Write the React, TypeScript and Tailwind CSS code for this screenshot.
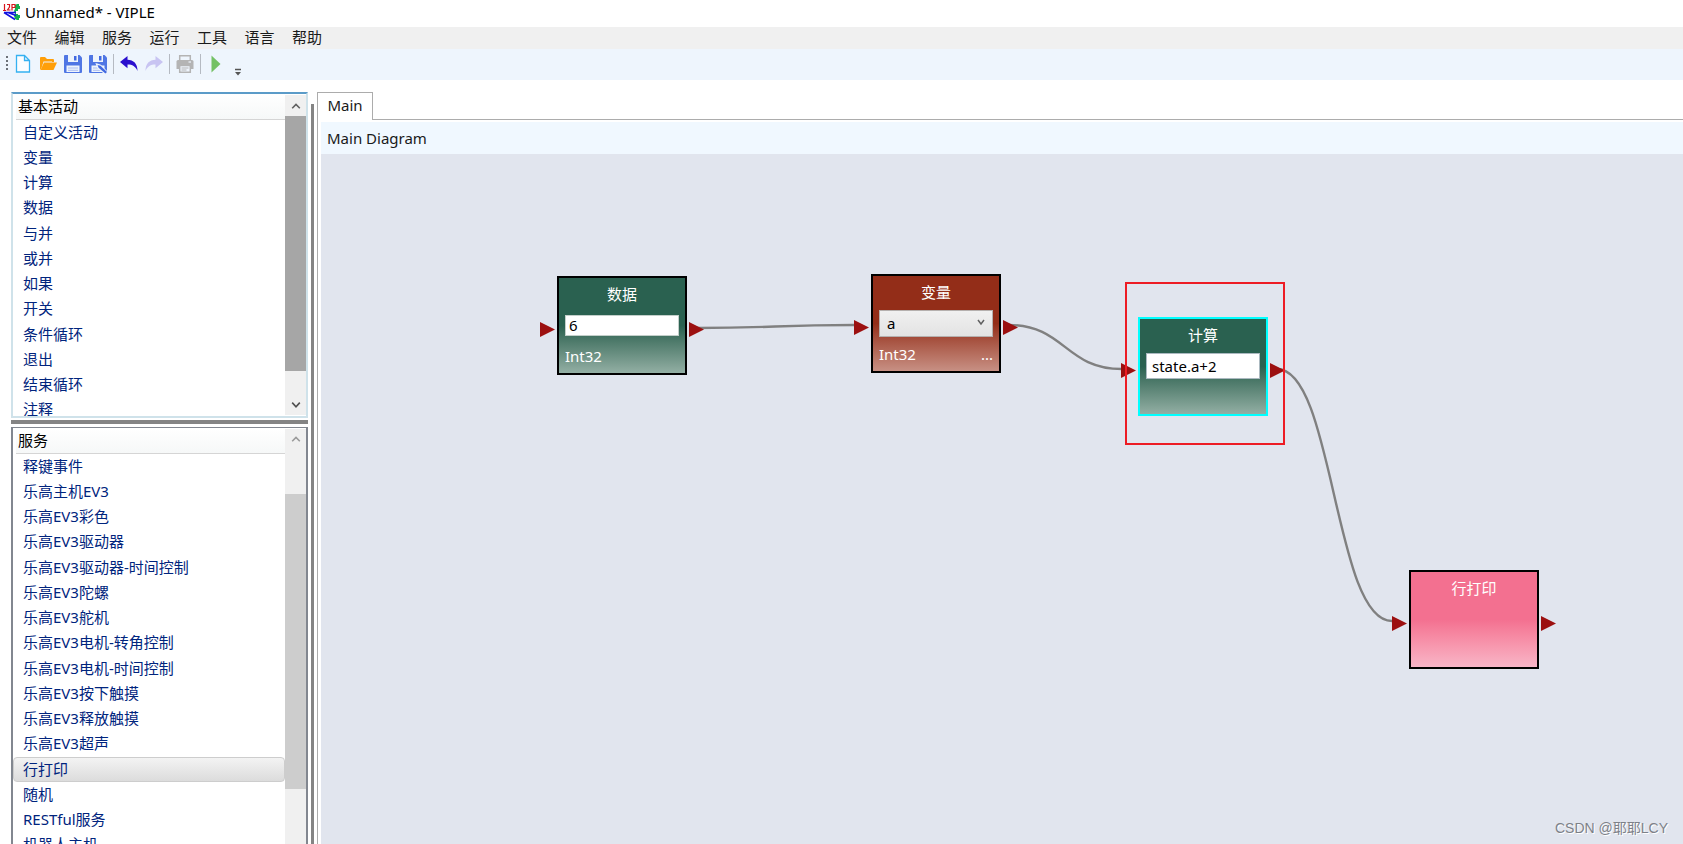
import type { ReactNode } from "react";

const MENUS = ["文件", "编辑", "服务", "运行", "工具", "语言", "帮助"];

const ACTIVITIES = [
  "自定义活动",
  "变量",
  "计算",
  "数据",
  "与并",
  "或并",
  "如果",
  "开关",
  "条件循环",
  "退出",
  "结束循环",
  "注释",
];

const SERVICES = [
  "释键事件",
  "乐高主机EV3",
  "乐高EV3彩色",
  "乐高EV3驱动器",
  "乐高EV3驱动器-时间控制",
  "乐高EV3陀螺",
  "乐高EV3舵机",
  "乐高EV3电机-转角控制",
  "乐高EV3电机-时间控制",
  "乐高EV3按下触摸",
  "乐高EV3释放触摸",
  "乐高EV3超声",
  "行打印",
  "随机",
  "RESTful服务",
  "机器人主机",
];

function Logo() {
  return (
    <svg width="18" height="18" viewBox="0 0 18 18" aria-hidden>
      <path
        d="M12 2l2-1h2v2h1v3h-2v2h-2v3h2v1h2v3h-1v2h-2l-2-1-1-3 1-2-1-3 1-2z"
        fill="#12b050"
      />
      <path d="M1 9.500h12M1 9.500l11 7M5 9.500l8 3" stroke="#1212e0" strokeWidth="1.600" fill="none" />
      <path
        d="M1.500 1v6.500M0 7.500h3M4 1.500h2.500v2.500L4.500 7h3M9 7.500V1.500h3v3H9"
        stroke="#d8141c"
        strokeWidth="1.200"
        fill="none"
      />
    </svg>
  );
}

function NewIcon() {
  return (
    <svg width="18" height="20" viewBox="0 0 18 20" aria-hidden>
      <path
        d="M2.500 1.500h8l5 5v11.500h-13zM10.500 1.500v5h5"
        fill="#fbfdff"
        stroke="#35b1f1"
        strokeWidth="1.300"
      />
    </svg>
  );
}

function OpenIcon() {
  return (
    <svg width="18" height="20" viewBox="0 0 18 20" aria-hidden>
      <path d="M1 16V4q0-1 1-1h4l2 2h6q1 0 1 1v2h-2V7.500H4.500L2.500 14z" fill="#ff9f0a" />
      <path d="M5 8.500h13L14.500 16H1.500z" fill="#ff9f0a" />
    </svg>
  );
}

function SaveIcon({ pencil }: { pencil?: boolean }) {
  return (
    <svg width="20" height="20" viewBox="0 0 20 20" aria-hidden>
      <path d="M1 2q0-1 1-1h14.500L19 3.500V18q0 1-1 1H2q-1 0-1-1z" fill="#4f76e4" />
      <path d="M5 1h10v7H5z" fill="#eef4fc" />
      <path d="M11 2h2.500v4.500H11z" fill="#4169e1" />
      <path d="M3.500 11.500h13V18h-13z" fill="#eef4fc" />
      <path d="M5 14h10M5 16.300h10" stroke="#a9bcf0" strokeWidth="1" />
      {pencil && (
        <>
          <path
            d="M9 10.500l3 .8 7 7-1.500 1.500-7.500-6.500z"
            fill="#eef4fc"
            stroke="#eef4fc"
            strokeWidth="2"
          />
          <path d="M9.500 11l3 .8 6.500 6.200-1.600 1.600-6.800-5.800z" fill="#4169e1" />
        </>
      )}
    </svg>
  );
}

function UndoIcon({ redo }: { redo?: boolean }) {
  return (
    <svg
      width="18"
      height="18"
      viewBox="0 0 18 18"
      aria-hidden
      className={redo ? "-scale-x-100 text-[#c8c4f2]" : "text-[#2a0fce]"}
    >
      <path
        d="M0 7l7.500-6v3.800C13.500 5 17.500 8.500 17.500 16 15.500 11.500 12.500 9.600 7.500 9.600v3.600z"
        fill="currentColor"
      />
    </svg>
  );
}

function PrintIcon() {
  return (
    <svg width="18" height="20" viewBox="0 0 18 20" aria-hidden>
      <path d="M3.700 6V1.700h10.600V6" fill="none" stroke="#b4b4b4" strokeWidth="1.500" />
      <path d="M2 6h14q1.500 0 1.500 1.500V15H.5V7.500Q.5 6 2 6z" fill="#b4b4b4" />
      <path
        d="M3.700 11.500h10.600v6.800H3.700z"
        fill="#eef4fc"
        stroke="#b4b4b4"
        strokeWidth="1.500"
      />
      <path d="M5.500 14h7M5.500 16h5" stroke="#b4b4b4" strokeWidth="1" />
      <path d="M12.500 8h2.500" stroke="#eef4fc" strokeWidth="1.200" />
    </svg>
  );
}

function ToolButton({ label, children }: { label: string; children: ReactNode }) {
  return (
    <button
      type="button"
      aria-label={label}
      className="flex h-6 w-[25px] items-center justify-center"
    >
      {children}
    </button>
  );
}

function ToolSeparator() {
  return (
    <div className="flex w-[6px] justify-center" aria-hidden>
      <div className="h-5 w-px bg-[#b5bac2]" />
    </div>
  );
}

function Toolbar() {
  return (
    <div className="flex h-[31px] shrink-0 items-center bg-[#eef5fd] pb-0.5 pl-[6px]">
      <svg width="4" height="17" viewBox="0 0 4 17" aria-hidden>
        <path d="M1 1v16" stroke="#6b7078" strokeWidth="2" strokeDasharray="2 2" />
      </svg>
      <ToolButton label="新建">
        <NewIcon />
      </ToolButton>
      <ToolButton label="打开">
        <OpenIcon />
      </ToolButton>
      <ToolButton label="保存">
        <SaveIcon />
      </ToolButton>
      <ToolButton label="另存为">
        <SaveIcon pencil />
      </ToolButton>
      <ToolSeparator />
      <ToolButton label="撤销">
        <UndoIcon />
      </ToolButton>
      <ToolButton label="重做">
        <UndoIcon redo />
      </ToolButton>
      <ToolSeparator />
      <ToolButton label="打印">
        <PrintIcon />
      </ToolButton>
      <ToolSeparator />
      <ToolButton label="运行">
        <svg width="10" height="18" viewBox="0 0 10 18" aria-hidden>
          <path d="M.5.5L9.500 9 .5 17.500z" fill="#74c165" />
        </svg>
      </ToolButton>
      <button
        type="button"
        aria-label="更多"
        className="ml-1 flex h-6 w-3 items-end justify-center"
      >
        <svg width="8" height="8" viewBox="0 0 8 8" aria-hidden>
          <path d="M1 1.500h6" stroke="#555" strokeWidth="1.500" />
          <path d="M1 4h6L4 7.500z" fill="#555" />
        </svg>
      </button>
    </div>
  );
}

function Chevron({ up, color }: { up?: boolean; color: string }) {
  return (
    <svg width="10" height="8" viewBox="0 0 10 8" aria-hidden>
      <path
        d={up ? "M1.200 6.200L5 2.400l3.800 3.800" : "M1.200 1.600L5 5.800l3.800-4.200"}
        fill="none"
        stroke={color}
        strokeWidth="1.600"
      />
    </svg>
  );
}

function PanelHeader({ children }: { children: ReactNode }) {
  return (
    <h2 className="ml-[3px] flex h-[26px] shrink-0 items-center border-b border-[#d5d5d5] bg-linear-to-b from-white to-[#f6f8f8] pb-0.5 pl-0.5 text-black">
      {children}
    </h2>
  );
}

function ActivityPanel() {
  return (
    <section className="flex h-[326px] shrink-0 overflow-hidden border-2 border-[#cfe2ea] border-t-[#5b9bc8] bg-white">
      <div className="flex min-w-0 flex-1 flex-col">
        <PanelHeader>基本活动</PanelHeader>
        <ul className="grid h-[303px] shrink-0 auto-rows-fr text-[#00247d]">
          {ACTIVITIES.map((name) => (
            <li key={name} className="flex items-center pb-0.5 pl-[10px]">
              {name}
            </li>
          ))}
        </ul>
      </div>
      <div className="my-px flex w-[21px] flex-col bg-[#f0f0f0]">
        <button
          type="button"
          aria-label="向上滚动"
          className="flex h-[21px] items-center justify-center"
        >
          <Chevron up color="#606060" />
        </button>
        <div className="h-[255px] bg-[#a6a6a6]" />
        <button
          type="button"
          aria-label="向下滚动"
          className="mt-auto flex h-[21px] items-center justify-center"
        >
          <Chevron color="#505050" />
        </button>
      </div>
    </section>
  );
}

function ServicePanel() {
  return (
    <section className="flex min-h-0 flex-1 overflow-hidden border-x-2 border-t border-[#828790] bg-white">
      <div className="flex min-w-0 flex-1 flex-col">
        <PanelHeader>服务</PanelHeader>
        <ul className="grid h-[404px] shrink-0 auto-rows-fr text-[#00247d]">
          {SERVICES.map((name) =>
            name === "行打印" ? (
              <li
                key={name}
                aria-current="true"
                className="flex items-center rounded-sm border border-[#cdcdcd] bg-linear-to-b from-[#f3f3f3] to-[#dcdcdc] pb-0.5 pl-[9px]"
              >
                {name}
              </li>
            ) : (
              <li key={name} className="flex items-center pb-0.5 pl-[10px]">
                {name}
              </li>
            ),
          )}
        </ul>
      </div>
      <div className="mt-px flex w-[21px] flex-col bg-[#f0f0f0]">
        <button
          type="button"
          aria-label="向上滚动"
          className="flex h-5 items-center justify-center"
        >
          <Chevron up color="#9a9a9a" />
        </button>
        <div className="mt-[45px] h-[295px] bg-[#cdcdcd]" />
      </div>
    </section>
  );
}

function Port() {
  return (
    <svg width="15" height="15" viewBox="0 0 15 15" aria-hidden className="mt-[46px] shrink-0">
      <path d="M0 0l15 7.500L0 15z" fill="#9c1010" />
    </svg>
  );
}

// One block on the canvas: input pin, body, output pin.
function Block({
  place,
  tone,
  title,
  children,
}: {
  place: string;
  tone: string;
  title: string;
  children?: ReactNode;
}) {
  return (
    <div className={`absolute flex items-start gap-0.5 ${place}`}>
      <Port />
      <div
        className={`flex h-[99px] w-[130px] flex-col border-2 bg-linear-to-b from-50% px-[6px] text-white ${tone}`}
      >
        <h3 className="flex h-[34px] shrink-0 items-center justify-center pb-0.5">{title}</h3>
        {children}
      </div>
      <Port />
    </div>
  );
}

function Canvas() {
  return (
    <div className="relative min-h-0 flex-1 overflow-hidden bg-[#e1e5ee]">
      <svg
        width="1362"
        height="690"
        viewBox="0 0 1362 690"
        className="absolute top-0 left-0"
        fill="none"
        stroke="#808080"
        strokeWidth="2.400"
        aria-hidden
      >
        <path d="M375 174C454 174 454 171 533 171" />
        <path d="M688 171C744 171 744 215 801 215" />
        <path d="M956 215C1013 215 1013 467 1071 467" />
      </svg>

      <Block
        place="top-[122px] left-[219px]"
        tone="border-black from-[#2a6150] to-[#93afa4]"
        title="数据"
      >
        <input
          aria-label="数据"
          defaultValue="6"
          className="mt-[3px] h-[21px] w-full border border-[#c3cfca] bg-white pb-0.5 pl-[3px] text-black"
        />
        <div className="mt-[10px] flex h-5 items-center">Int32</div>
      </Block>

      <Block
        place="top-[120px] left-[533px]"
        tone="border-black from-[#932d18] to-[#c79084]"
        title="变量"
      >
        <div className="relative">
          <select
            aria-label="变量"
            defaultValue="a"
            className="block h-[27px] w-full appearance-none border border-[#b5b0ae] bg-linear-to-b from-[#f0f0f0] to-[#e3e3e3] pb-0.5 pl-[7px] text-black"
          >
            <option>a</option>
          </select>
          <span className="pointer-events-none absolute top-2 right-2">
            <svg width="8" height="8" viewBox="0 0 8 8" aria-hidden className="block">
              <path d="M1 2l3 4 3-4" fill="none" stroke="#606060" strokeWidth="1.500" />
            </svg>
          </span>
        </div>
        <div className="mt-[7px] flex h-5 items-center justify-between">
          <span>Int32</span>
          <span>...</span>
        </div>
      </Block>

      <Block
        place="top-[163px] left-[800px]"
        tone="border-[#00ffff] from-[#2a6150] to-[#93afa4]"
        title="计算"
      >
        <input
          aria-label="计算"
          defaultValue="state.a+2"
          className="h-[26px] w-full border border-[#abb9c0] bg-white pl-[5px] text-black"
        />
      </Block>
      <div className="pointer-events-none absolute top-[128px] left-[804px] h-[163px] w-[160px] border-2 border-[#ed1c24]" />

      <Block
        place="top-[416px] left-[1071px]"
        tone="border-black from-[#f37090] to-[#f8b5c7]"
        title="行打印"
      />

      <div className="absolute right-[15px] bottom-[6px] font-['Liberation_Sans','Noto_Sans_CJK_SC',sans-serif] text-sm text-[#7d8188] [text-shadow:1px_1px_0_#ffffff]">
        CSDN @耶耶LCY
      </div>
    </div>
  );
}

export default function App() {
  return (
    <div className="flex h-screen flex-col overflow-hidden bg-white font-['Noto_Sans','Noto_Sans_CJK_SC',sans-serif] text-[15px] leading-5 text-[#1a1a1a]">
      <header className="flex h-[27px] shrink-0 items-center gap-1 pb-[3px] pl-[3px] text-black">
        <Logo />
        <h1>Unnamed* - VIPLE</h1>
      </header>
      <nav className="flex h-[22px] shrink-0 items-center bg-[#f0f0f0] pb-0.5 pl-[7px]">
        <ul className="flex w-[315px] justify-between">
          {MENUS.map((name) => (
            <li key={name}>
              <button type="button">{name}</button>
            </li>
          ))}
        </ul>
      </nav>
      <Toolbar />

      <main className="flex min-h-0 flex-1 pt-3 pl-[11px]">
        <div className="flex w-[297px] shrink-0 flex-col">
          <ActivityPanel />
          <div className="mt-0.5 mb-[3px] h-1 shrink-0 bg-[#848484]" />
          <ServicePanel />
        </div>
        <div className="mt-3 ml-[3px] w-[3px] shrink-0 bg-[#848484]" />
        <div className="ml-[3px] flex min-w-0 flex-1 flex-col">
          <div className="flex h-7 shrink-0" role="tablist">
            <button
              type="button"
              role="tab"
              aria-selected="true"
              className="w-14 border border-b-0 border-[#acacac] pb-1 text-center"
            >
              Main
            </button>
            <div className="flex-1 border-b border-[#acacac]" />
          </div>
          <div className="flex min-h-0 flex-1 flex-col border-l border-[#acacac] pt-0.5 pl-[3px]">
            <h2 className="flex h-8 shrink-0 items-center bg-[#f0f8ff] pl-[6px]">Main Diagram</h2>
            <Canvas />
          </div>
        </div>
      </main>
    </div>
  );
}
